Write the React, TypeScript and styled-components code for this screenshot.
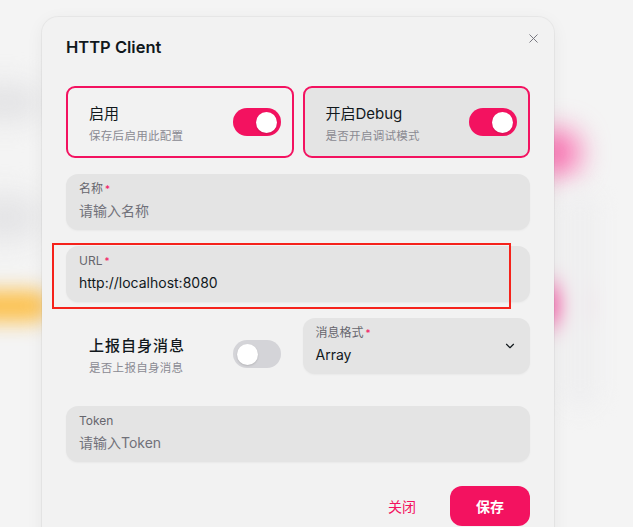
import { X, ChevronDown } from 'lucide-react';
import styled, { createGlobalStyle } from 'styled-components';

const PINK = '#f31260';
const FIELD_BG = '#e4e4e4';

const GlobalStyle = createGlobalStyle`
    html, body {
        margin: 0;
        height: 100%;
        background: #f4f4f4;
        font-family: Inter, "Noto Sans CJK SC", sans-serif;
        overflow: hidden;
    }
    #root { height: 100%; }
`;

const Page = styled.div`
    position: relative;
    height: 527px;
    overflow: hidden;
    padding: 17px 0 0 42px;
    box-sizing: border-box;
`;

const Blob = styled.div<{ $x: number; $y: number; $w: number; $h: number; $c: string; $b: number }>`
    position: absolute;
    left: ${p => p.$x}px;
    top: ${p => p.$y}px;
    width: ${p => p.$w}px;
    height: ${p => p.$h}px;
    background: ${p => p.$c};
    border-radius: 20px;
    filter: blur(${p => p.$b}px);
`;

const Modal = styled.div`
    position: relative;
    width: 512px;
    height: 540px;
    background: #f2f2f2;
    border-radius: 16px;
    box-shadow: 0 0 0 1px rgba(0, 0, 0, 0.04), 0 4px 18px rgba(0, 0, 0, 0.06);
    display: flex;
    flex-direction: column;
    padding: 0 24px;
    box-sizing: border-box;
`;

const Header = styled.h2`
    margin: 0;
    padding: 20px 0 0;
    height: 49px;
    box-sizing: border-box;
    font-size: 16.5px;
    font-weight: 600;
    color: #11181c;
`;

const Close = styled.button`
    position: absolute;
    top: 14px;
    right: 13px;
    background: none;
    border: none;
    padding: 0;
    color: #71717a;
    display: flex;
`;

const Body = styled.div`
    display: flex;
    flex-direction: column;
    gap: 16px;
    padding-top: 20px;
`;

const Grid = styled.div`
    display: grid;
    grid-template-columns: 1fr 1fr;
    gap: 9px;
    align-items: start;
`;

const SwitchCard = styled.div<{ $hover?: boolean; $plain?: boolean }>`
    height: 72px;
    box-sizing: border-box;
    display: flex;
    align-items: center;
    justify-content: space-between;
    padding: 0 11px 0 21px;
    border-radius: 9px;
    border: 2px solid ${p => (p.$plain ? 'transparent' : PINK)};
    background: ${p => (p.$hover ? FIELD_BG : 'transparent')};
`;

const Texts = styled.div`
    display: flex;
    flex-direction: column;
    gap: 4px;
`;

const CardTitle = styled.span<{ $wide?: boolean }>`
    font-size: 15px;
    color: #11181c;
    letter-spacing: ${p => (p.$wide ? '1px' : '0')};
    font-weight: ${p => (p.$wide ? 500 : 400)};
`;

const CardSub = styled.span`
    font-size: 11.5px;
    color: #8a8a92;
    letter-spacing: 0.3px;
`;

const Track = styled.div<{ $on: boolean }>`
    width: 48px;
    height: 28px;
    border-radius: 14px;
    background: ${p => (p.$on ? PINK : '#d4d4d8')};
    display: flex;
    align-items: center;
    padding: 0 4px;
    box-sizing: border-box;
    justify-content: ${p => (p.$on ? 'flex-end' : 'flex-start')};
`;

const Thumb = styled.div`
    width: 21px;
    height: 21px;
    border-radius: 50%;
    background: #fff;
    box-shadow: 0 1px 2px rgba(0, 0, 0, 0.15);
`;

const Field = styled.div`
    position: relative;
    height: 56px;
    border-radius: 12px;
    background: ${FIELD_BG};
    box-shadow: 0 1px 2px rgba(0, 0, 0, 0.04);
    padding: 7px 13px 0;
    box-sizing: border-box;
    display: flex;
    flex-direction: column;
    gap: 3px;
`;

const Label = styled.span`
    font-size: 12px;
    color: #66666d;
    line-height: 16px;
    &::after {
        content: ${p => (p['data-req'] ? "'*'" : "''")};
        color: ${PINK};
        margin-left: 2px;
        font-size: 10px;
        vertical-align: top;
    }
`;

const Value = styled.span<{ $placeholder?: boolean }>`
    font-size: 14px;
    line-height: 22px;
    color: ${p => (p.$placeholder ? '#71717a' : '#11181c')};
`;

const Chevron = styled.span`
    position: absolute;
    right: 13px;
    top: 21px;
    display: flex;
    color: #11181c;
`;

const Annotation = styled.div`
    position: absolute;
    left: -14px;
    top: -3px;
    width: 459px;
    height: 66px;
    border: 2px solid #f5221b;
    box-sizing: border-box;
    pointer-events: none;
`;

const Footer = styled.div`
    display: flex;
    justify-content: flex-end;
    gap: 8px;
    padding-top: 8px;
`;

const Button = styled.button<{ $solid?: boolean }>`
    min-width: 80px;
    height: 40px;
    border-radius: 12px;
    border: none;
    font-family: inherit;
    font-size: 14px;
    font-weight: ${p => (p.$solid ? 600 : 400)};
    background: ${p => (p.$solid ? PINK : 'transparent')};
    color: ${p => (p.$solid ? '#fff' : PINK)};
`;

export default function App() {
    return (
        <>
            <GlobalStyle />
            <Page>
                <Blob $x={-30} $y={85} $w={70} $h={35} $c="#e2e2e4" $b={14} />
                <Blob $x={-30} $y={195} $w={70} $h={45} $c="#e4e4e6" $b={14} />
                <Blob $x={-30} $y={290} $w={80} $h={32} $c="#fcc251" $b={10} />
                <Blob $x={530} $y={130} $w={50} $h={45} $c="#f970b0" $b={14} />
                <Blob $x={530} $y={285} $w={50} $h={40} $c="#f75aa5" $b={12} />
                <Blob $x={560} $y={190} $w={40} $h={220} $c="#efeff0" $b={10} />
                <Modal>
                    <Header>HTTP Client</Header>
                    <Close><X size={15} strokeWidth={1.5} /></Close>
                    <Body>
                        <Grid>
                            <SwitchCard>
                                <Texts>
                                    <CardTitle>启用</CardTitle>
                                    <CardSub>保存后启用此配置</CardSub>
                                </Texts>
                                <Track $on><Thumb /></Track>
                            </SwitchCard>
                            <SwitchCard $hover>
                                <Texts>
                                    <CardTitle>开启Debug</CardTitle>
                                    <CardSub>是否开启调试模式</CardSub>
                                </Texts>
                                <Track $on><Thumb /></Track>
                            </SwitchCard>
                        </Grid>
                        <Field>
                            <Label data-req>名称</Label>
                            <Value $placeholder>请输入名称</Value>
                        </Field>
                        <Field>
                            <Label data-req>URL</Label>
                            <Value>http://localhost:8080</Value>
                            <Annotation />
                        </Field>
                        <Grid>
                            <SwitchCard $plain>
                                <Texts>
                                    <CardTitle $wide>上报自身消息</CardTitle>
                                    <CardSub>是否上报自身消息</CardSub>
                                </Texts>
                                <Track $on={false}><Thumb /></Track>
                            </SwitchCard>
                            <Field>
                                <Label data-req>消息格式</Label>
                                <Value>Array</Value>
                                <Chevron><ChevronDown size={14} strokeWidth={2} /></Chevron>
                            </Field>
                        </Grid>
                        <Field>
                            <Label>Token</Label>
                            <Value $placeholder>请输入Token</Value>
                        </Field>
                        <Footer>
                            <Button>关闭</Button>
                            <Button $solid>保存</Button>
                        </Footer>
                    </Body>
                </Modal>
            </Page>
        </>
    );
}
